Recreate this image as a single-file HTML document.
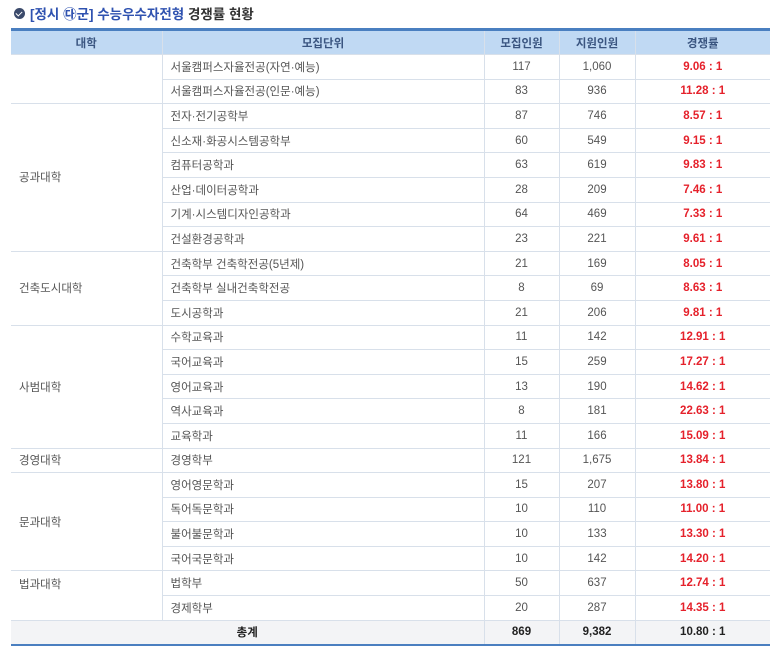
<!DOCTYPE html>
<html><head><meta charset="utf-8"><style>
body{margin:0;background:#fff;font-family:"Liberation Sans","Noto Sans CJK KR",sans-serif;width:773px;height:646px;overflow:hidden}
.t{position:absolute;left:14px;top:3px;font-size:13.5px;font-weight:bold;color:#333;display:flex;align-items:center}
.t .ic{width:11px;height:11px;border-radius:50%;background:#3b4a6b;margin-right:5px;position:relative}
.t .ic:after{content:"";position:absolute;left:3px;top:2px;width:3px;height:5px;border:solid #fff;border-width:0 1.5px 1.5px 0;transform:rotate(45deg)}
.b{color:#2f52b0}
table{position:absolute;left:11px;top:28px;width:759px;border-collapse:collapse;font-size:11.5px;color:#555;border-top:3px solid #4a7fc0;border-bottom:2px solid #4a7fc0}
td,th{border:1px solid #d8e0ea;height:23.6px;padding:0;text-align:center}
th{background:#c0d9f3;color:#3a5580;font-weight:bold;height:23px}
tr>*:first-child{border-left:none}tr>*:last-child{border-right:none}
td.l{text-align:left;padding-left:8px}
td.r{color:#e5212b;font-weight:bold}
tr.tot td{background:#f3f4f6;color:#222;font-weight:bold}
</style></head><body>
<div class="t"><span class="ic"></span><span class="b">[정시 ㉰군] 수능우수자전형</span>&nbsp;경쟁률 현황</div>
<table>
<colgroup><col style="width:151px"><col style="width:322px"><col style="width:75px"><col style="width:76px"><col></colgroup>
<tr><th>대학</th><th>모집단위</th><th>모집인원</th><th>지원인원</th><th>경쟁률</th></tr>
<tr><td rowspan="2"></td><td class="l">서울캠퍼스자율전공(자연·예능)</td><td>117</td><td>1,060</td><td class="r">9.06 : 1</td></tr>
<tr><td class="l">서울캠퍼스자율전공(인문·예능)</td><td>83</td><td>936</td><td class="r">11.28 : 1</td></tr>
<tr><td rowspan="6" class="l">공과대학</td><td class="l">전자·전기공학부</td><td>87</td><td>746</td><td class="r">8.57 : 1</td></tr>
<tr><td class="l">신소재·화공시스템공학부</td><td>60</td><td>549</td><td class="r">9.15 : 1</td></tr>
<tr><td class="l">컴퓨터공학과</td><td>63</td><td>619</td><td class="r">9.83 : 1</td></tr>
<tr><td class="l">산업·데이터공학과</td><td>28</td><td>209</td><td class="r">7.46 : 1</td></tr>
<tr><td class="l">기계·시스템디자인공학과</td><td>64</td><td>469</td><td class="r">7.33 : 1</td></tr>
<tr><td class="l">건설환경공학과</td><td>23</td><td>221</td><td class="r">9.61 : 1</td></tr>
<tr><td rowspan="3" class="l">건축도시대학</td><td class="l">건축학부 건축학전공(5년제)</td><td>21</td><td>169</td><td class="r">8.05 : 1</td></tr>
<tr><td class="l">건축학부 실내건축학전공</td><td>8</td><td>69</td><td class="r">8.63 : 1</td></tr>
<tr><td class="l">도시공학과</td><td>21</td><td>206</td><td class="r">9.81 : 1</td></tr>
<tr><td rowspan="5" class="l">사범대학</td><td class="l">수학교육과</td><td>11</td><td>142</td><td class="r">12.91 : 1</td></tr>
<tr><td class="l">국어교육과</td><td>15</td><td>259</td><td class="r">17.27 : 1</td></tr>
<tr><td class="l">영어교육과</td><td>13</td><td>190</td><td class="r">14.62 : 1</td></tr>
<tr><td class="l">역사교육과</td><td>8</td><td>181</td><td class="r">22.63 : 1</td></tr>
<tr><td class="l">교육학과</td><td>11</td><td>166</td><td class="r">15.09 : 1</td></tr>
<tr><td class="l">경영대학</td><td class="l">경영학부</td><td>121</td><td>1,675</td><td class="r">13.84 : 1</td></tr>
<tr><td rowspan="4" class="l">문과대학</td><td class="l">영어영문학과</td><td>15</td><td>207</td><td class="r">13.80 : 1</td></tr>
<tr><td class="l">독어독문학과</td><td>10</td><td>110</td><td class="r">11.00 : 1</td></tr>
<tr><td class="l">불어불문학과</td><td>10</td><td>133</td><td class="r">13.30 : 1</td></tr>
<tr><td class="l">국어국문학과</td><td>10</td><td>142</td><td class="r">14.20 : 1</td></tr>
<tr><td class="l" style="border-bottom:none">법과대학</td><td class="l">법학부</td><td>50</td><td>637</td><td class="r">12.74 : 1</td></tr>
<tr><td style="border-top:none"></td><td class="l">경제학부</td><td>20</td><td>287</td><td class="r">14.35 : 1</td></tr>
<tr class="tot"><td colspan="2">총계</td><td>869</td><td>9,382</td><td>10.80 : 1</td></tr>
</table>
</body></html>
